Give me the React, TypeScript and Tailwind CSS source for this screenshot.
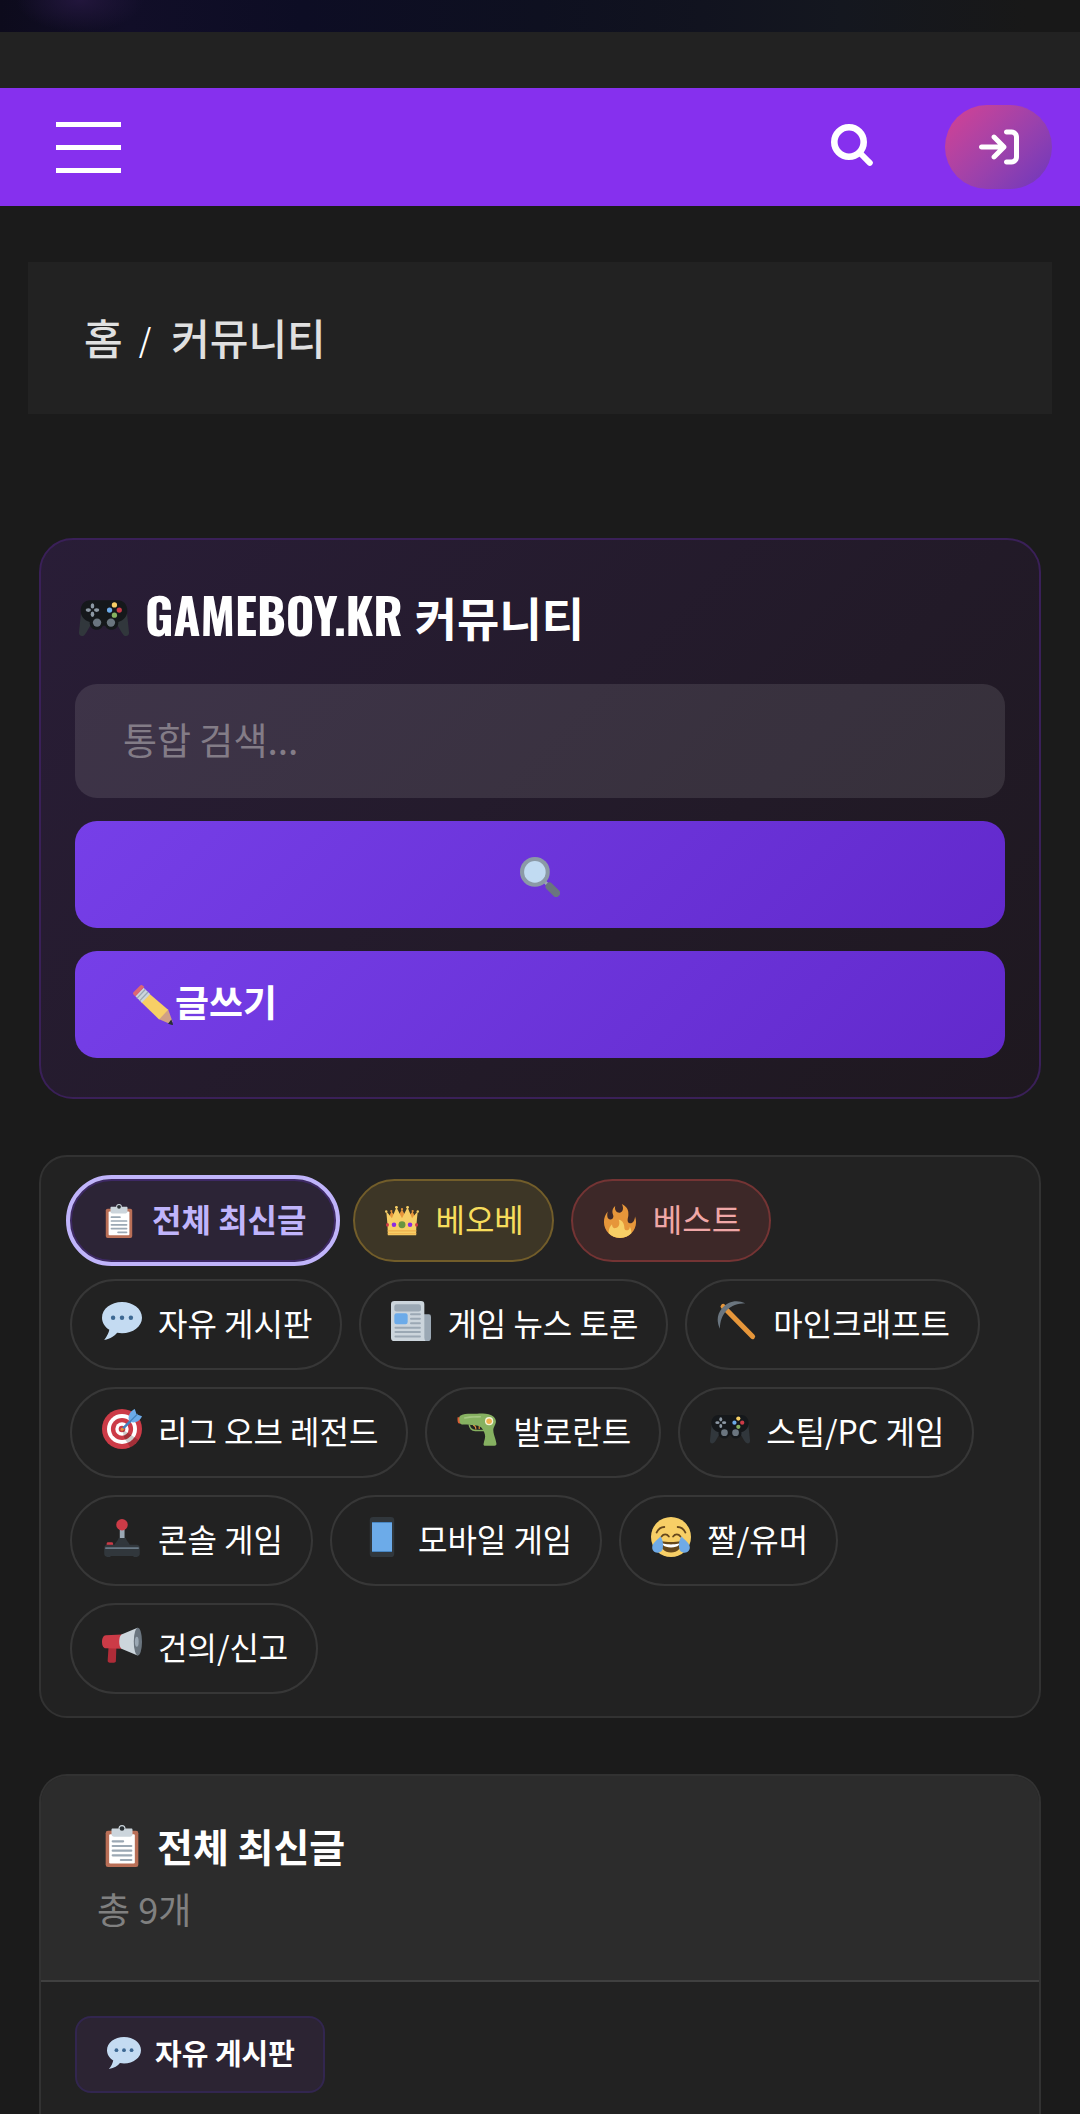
import type { ReactNode } from "react";
import { FaArrowRightToBracket } from "react-icons/fa6";

type IconProps = { className?: string };

const SearchIcon = ({ className = "" }: IconProps) => (
  <svg
    viewBox="0 0 42 42"
    aria-hidden="true"
    fill="none"
    stroke="currentColor"
    className={className}
  >
    <circle cx="18" cy="18" r="14.700" strokeWidth="6.600" />
    <path d="m29 29 9.800 9.800" strokeWidth="6" strokeLinecap="round" />
  </svg>
);

const Emoji = ({
  className = "",
  children,
}: IconProps & { children: ReactNode }) => (
  <svg
    viewBox="0 0 36 36"
    aria-hidden="true"
    className={`shrink-0 ${className}`}
  >
    {children}
  </svg>
);

const Gamepad = ({ className }: IconProps) => (
  <Emoji className={className}>
    <path
      fill="#31373c"
      d="M1.5 14 0 28c-.2 2.300.8 3 2 3 1.500 0 2.200-1 3.500-3l4-7zM34.500 14 36 28c.2 2.300-.8 3-2 3-1.500 0-2.200-1-3.500-3l-4-7z"
    />
    <path
      fill="#15181b"
      d="M8 5.300h20c4 0 6.800 3 6.800 7.500 0 4-2.800 7.200-6.500 8a5 5 0 0 1-9.500 2.800h-1.600a5 5 0 0 1-9.500-2.800c-3.700-.8-6.500-4-6.500-8C1.200 8.300 4 5.300 8 5.300z"
    />
    <g fill="#8d99a5">
      <ellipse cx="9.700" cy="9.300" rx="1.300" ry="1.900" />
      <ellipse cx="9.700" cy="15.300" rx="1.300" ry="1.900" />
      <ellipse cx="6.700" cy="12.300" rx="1.900" ry="1.300" />
      <ellipse cx="12.700" cy="12.300" rx="1.900" ry="1.300" />
    </g>
    <circle cx="25.500" cy="8.600" r="1.900" fill="#f7cf66" />
    <circle cx="25.500" cy="16" r="1.900" fill="#86b161" />
    <circle cx="22" cy="12.300" r="1.900" fill="#6cabe9" />
    <circle cx="29" cy="12.300" r="1.900" fill="#cc3b47" />
    <circle cx="13" cy="21.300" r="3" fill="#6a757f" />
    <circle cx="23" cy="21.300" r="3" fill="#6a757f" />
  </Emoji>
);

const Magnifier = ({ className }: IconProps) => (
  <Emoji className={className}>
    <path stroke="#9ba8b4" strokeWidth="3" d="m21 21 5 5" />
    <path
      stroke="#6a757f"
      strokeWidth="7"
      strokeLinecap="round"
      d="m26.500 26.500 6 6"
    />
    <circle cx="13.400" cy="13.400" r="13.400" fill="#8b9aa6" />
    <circle cx="13.400" cy="13.400" r="9.700" fill="#c1dbf2" />
  </Emoji>
);

const Pencil = ({ className }: IconProps) => (
  <Emoji className={className}>
    <path fill="#d0a086" d="M23 30.500 31.500 21.500 35.600 33 33.500 35.200z" />
    <path fill="#292f33" d="m34.500 31 1.500 4.300c.1.500-.3.800-.8.700l-3.700-1.200z" />
    <path fill="#f7cf66" d="m15 8 16.600 14.200L23.500 31 7.500 15.500z" />
    <path fill="#ccd5dc" d="m9.500 2.500 6 5.500-7.500 8-6-6z" />
    <path
      fill="none"
      stroke="#9ba8b4"
      strokeWidth="1.200"
      d="m11 4-7.500 8M13.500 6.300l-7.500 8"
    />
    <path
      fill="#dd6773"
      d="M.4 6.500 6.300.6c.8-.8 1.800-.8 2.600 0l1.300 1.200-8 8.500L.4 8.500c-.5-.5-.5-1.400 0-2z"
    />
  </Emoji>
);

const Clipboard = ({ className }: IconProps) => (
  <Emoji className={className}>
    <rect x="4" y="5" width="28" height="31" rx="2" fill="#b96f57" />
    <rect x="7" y="8" width="22" height="25" rx="1" fill="#fff" />
    <path
      fill="#ccd5dc"
      d="M10 3h5a3 3 0 0 1 6 0h5c.6 0 1 .5 1 1v4c0 1.100-.9 2-2 2H11a2 2 0 0 1-2-2V4c0-.5.4-1 1-1z"
    />
    <circle cx="18" cy="3" r="2" fill="#292f33" />
    <path
      stroke="#9ba8b4"
      strokeWidth="1.800"
      strokeLinecap="round"
      d="M10 14h9M10 18h16M10 22h16M10 26h16M17 30h9"
    />
  </Emoji>
);

const Crown = ({ className }: IconProps) => (
  <Emoji className={className}>
    <path
      fill="#e6963a"
      d="M14.174 17.075 6.750 7.594l-3.722 9.481zM17.938 5.534l-6.563 12.389H24.500zM21.826 17.075l7.424-9.481 3.722 9.481z"
    />
    <path
      fill="#f7cf66"
      d="M28.669 15.190 23.887 3.523l-5.880 11.668h-.014l-5.880-11.668L7.331 15.190C4.197 10.833 1.280 8.042 1.280 8.042S3 20.750 3 33h30c0-12.250 1.720-24.958 1.720-24.958s-2.917 2.791-6.051 7.148z"
    />
    <g fill="#f7cf66">
      <circle cx="1.300" cy="8" r="1.300" />
      <circle cx="12.100" cy="3.500" r="1.500" />
      <circle cx="23.900" cy="3.500" r="1.500" />
      <circle cx="34.700" cy="8" r="1.300" />
    </g>
    <circle cx="6.700" cy="7.500" r="1.200" fill="#e6963a" />
    <circle cx="29.300" cy="7.500" r="1.200" fill="#e6963a" />
    <circle cx="18" cy="5.500" r="1.200" fill="#e6963a" />
    <circle cx="18" cy="22" r="3.700" fill="#6a953f" />
    <circle cx="26.500" cy="22" r="2.400" fill="#8b2be2" />
    <circle cx="9.500" cy="22" r="2.400" fill="#8b2be2" />
    <ellipse cx="2.600" cy="22" rx="1.600" ry="2" fill="#cc3b47" />
    <ellipse cx="33.400" cy="22" rx="1.600" ry="2" fill="#cc3b47" />
    <path stroke="#efb04e" strokeWidth="1.200" d="M2.800 28.500h30.400M2.800 31.500h30.400" />
  </Emoji>
);

const Fire = ({ className }: IconProps) => (
  <Emoji className={className}>
    <path
      fill="#e6963a"
      d="M35 19c0-2.062-.367-4.039-1.040-5.868-.46 5.389-3.333 8.157-6.335 6.868-2.812-1.208-.917-5.917-.777-8.164.236-3.809-.012-8.169-6.931-11.794 2.875 5.500.333 8.917-2.333 9.125-2.958.231-5.667-2.542-4.667-7.042-3.238 2.386-3.332 6.402-2.333 9 1.042 2.708-.042 4.958-2.583 5.208-2.840.28-4.418-3.041-2.963-8.333C2.520 10.965 1 14.805 1 19c0 9.389 7.611 17 17 17s17-7.611 17-17z"
    />
    <path
      fill="#f7cf66"
      d="M28.394 23.999c.148 3.084-2.561 4.293-4.019 3.709-2.106-.843-1.541-2.291-2.083-5.291s-2.625-5.083-5.708-6c2.250 6.333-1.247 8.667-3.080 9.084-1.872.426-3.753-.001-3.968-4.007C7.352 23.668 6 26.676 6 30c0 .368.023.73.055 1.090C9.125 34.124 13.342 36 18 36s8.875-1.876 11.945-4.910c.032-.36.055-.722.055-1.090 0-2.187-.584-4.236-1.606-6.001z"
    />
  </Emoji>
);

const SpeechBalloon = ({ className }: IconProps) => (
  <Emoji className={className}>
    <path
      fill="#c4dbf2"
      d="M18 1C8.059 1 0 7.268 0 15c0 4.368 2.574 8.268 6.604 10.835C6.080 28.144 4.859 31.569 2 35c5.758-.96 9.439-3.761 11.716-6.416 1.376.262 2.805.416 4.284.416 9.941 0 18-6.268 18-14S27.941 1 18 1z"
    />
    <circle cx="10" cy="15" r="2" fill="#3d6893" />
    <circle cx="18" cy="15" r="2" fill="#3d6893" />
    <circle cx="26" cy="15" r="2" fill="#3d6893" />
  </Emoji>
);

const Newspaper = ({ className }: IconProps) => (
  <Emoji className={className}>
    <path fill="#9ba8b4" d="M28 12h6a2 2 0 0 1 2 2v19a3 3 0 0 1-3 3h-5z" />
    <path
      fill="#ccd5dc"
      d="M3 0h24a3 3 0 0 1 3 3v30c0 1.200.4 2.200 1 3H3a3 3 0 0 1-3-3V3a3 3 0 0 1 3-3z"
    />
    <rect x="3" y="3" width="24" height="6.500" rx="2" fill="#9ba8b4" />
    <rect x="3" y="11" width="12" height="10" rx="2" fill="#6cabe9" />
    <path
      stroke="#9ba8b4"
      strokeWidth="1.800"
      strokeLinecap="round"
      d="M18 12h8M18 16h8M18 20h8M4 24h22M4 28h22M4 32h22"
    />
  </Emoji>
);

const Pickaxe = ({ className }: IconProps) => (
  <Emoji className={className}>
    <path
      stroke="#e6963a"
      strokeWidth="4.600"
      strokeLinecap="round"
      d="m5.500 5 26.500 27"
    />
    <path
      fill="#6a757f"
      d="M2.500 25C-.5 18 0 12 4.500 6.500 10 0 18-1.500 25.500 2 18.500 2.300 13 4 8.800 8.300 4.500 12.800 2.900 18 2.500 25z"
    />
  </Emoji>
);

const Target = ({ className }: IconProps) => (
  <Emoji className={className}>
    <circle cx="18" cy="18" r="18" fill="#cc3b47" />
    <circle cx="18" cy="18" r="13.500" fill="#fff" />
    <circle cx="18" cy="18" r="10" fill="#cc3b47" />
    <circle cx="18" cy="18" r="6" fill="#fff" />
    <circle cx="18" cy="18" r="3" fill="#cc3b47" />
    <path
      fill="#000"
      opacity=".2"
      d="m18.200 18.300 14.800 9.600c-1.800 3-4.600 5.300-7.600 6.600L20 26z"
    />
    <path
      stroke="#4482bd"
      strokeWidth="2.200"
      strokeLinecap="round"
      d="M19 17.500 29.500 7"
    />
    <path
      fill="#6cabe9"
      d="M24 9.500C23.500 5 26 1.500 29.500 0l1.600 4.800L36 6.500C34.500 10 31 12.700 26.500 12z"
    />
    <path stroke="#4482bd" strokeWidth="1.200" d="m24 12.500 8-8" />
    <circle cx="18.200" cy="18.200" r="1.400" fill="#e6963a" />
  </Emoji>
);

const WaterPistol = ({ className }: IconProps) => (
  <Emoji className={className}>
    <path fill="#dd5e35" d="M.5 7.500h3V13H1.800C.6 13 .3 11 .5 7.500z" />
    <path
      fill="none"
      stroke="#86b161"
      strokeWidth="1.300"
      d="M11 14c.5 3.500 2 5 5.500 5.300h8"
    />
    <path
      fill="none"
      stroke="#e6963a"
      strokeWidth="1"
      d="M14.500 14.500c2 .5 2.500 1.500 2.500 4M20 14v4"
    />
    <path
      fill="#86b161"
      d="M2.500 6.200C6 4 11 4.300 16 4.300c5.500 0 8.500-.6 12.500.4 3.500.9 6.300 3.200 6.500 6.300.2 3-2.500 5-2.300 8.500.2 4 2.800 9 2.800 12 0 1-.7 1.500-1.700 1.500h-8.500c-1 0-1.600-.6-1.400-1.600.6-3.400 2-5.400 1.200-8.400-.8-2.800-2.300-6-4.600-7.200C17 14 10 14.500 4.500 14c-2-.2-3-5-2-7.800z"
    />
    <path stroke="#a6c983" strokeWidth="1.400" strokeLinecap="round" d="M7 8c5-1 9-.8 14-1" />
    <circle cx="28.900" cy="11" r="3.700" fill="#f4f4d8" />
    <circle cx="28.900" cy="11" r="2.500" fill="#efb04e" />
  </Emoji>
);

const Joystick = ({ className }: IconProps) => (
  <Emoji className={className}>
    <path fill="#9ba8b4" d="M16 10h4.300v11H16z" />
    <path fill="#31373c" d="M15 19h6.500c.7 3 3 4 4 7.500H10.800c1-3.500 3.400-4.500 4.200-7.500z" />
    <rect x="4.200" y="22.700" width="5.800" height="4" rx="1.300" fill="#cc3b47" />
    <path
      fill="#31373c"
      d="M5 25h26c2 0 3 1.200 3 3v5c0 1.300-.7 2.200-2 2.500 0 .3-.5.500-1 .5h-2c-.6 0-1-.5-1-.8H8c0 .3-.4.800-1 .8H5c-.5 0-1-.2-1-.5-1.300-.3-2-1.200-2-2.500v-5c0-1.800 1-3 3-3z"
    />
    <path stroke="#6a7a86" strokeWidth="1.600" strokeLinecap="round" d="M3.500 28h29" />
    <circle cx="18" cy="7" r="5.200" fill="#cc3b47" />
  </Emoji>
);

const Mobile = ({ className }: IconProps) => (
  <Emoji className={className}>
    <rect x="7" width="22" height="36" rx="3" fill="#31373c" />
    <path fill="#4482bd" d="M9 4.500h18v27H9z" />
    <path fill="#6cabe9" d="M9 5.300h18v25.400H9z" />
  </Emoji>
);

const Joy = ({ className }: IconProps) => (
  <Emoji className={className}>
    <circle cx="18" cy="18" r="18" fill="#f7cf66" />
    <g fill="none" stroke="#65471b" strokeWidth="1.600" strokeLinecap="round">
      <path d="M5 14c1.500-3 4-5 7-5M31 14c-1.500-3-4-5-7-5" />
      <path d="M9.500 17.500c1.800-2.400 4.800-2.400 6.600 0M19.900 17.500c1.800-2.400 4.800-2.400 6.600 0" />
    </g>
    <path
      fill="#65471b"
      d="M18 22.500c-3.600 0-6-.4-9-1-.7-.1-1 .2-1 .8C8 27.500 12 32 18 32s10-4.500 10-9.700c0-.6-.3-.9-1-.8-3 .6-5.400 1-9 1z"
    />
    <path
      fill="#fff"
      d="M9.500 23.700s3.500 1 8.500 1 8.500-1 8.500-1-1.500 3.800-8.500 3.800-8.500-3.800-8.500-3.800z"
    />
    <path
      fill="#6faae6"
      d="M8.500 17.500C11 21 11 24 10.700 28c-.3 2.700-2.500 4.400-5 4.200-2.800-.2-4.800-2.400-4.600-5.200.3-3.700 4-6 7.400-9.500zM27.500 17.500C25 21 25 24 25.300 28c.3 2.700 2.500 4.400 5 4.200 2.800-.2 4.800-2.400 4.600-5.200-.3-3.700-4-6-7.400-9.500z"
    />
  </Emoji>
);

const Megaphone = ({ className }: IconProps) => (
  <Emoji className={className}>
    <path fill="#af2c38" d="M6 18h7l-.5 14.500c0 1-.8 1.500-1.800 1.500H7c-1.200 0-2-.8-1.900-2z" />
    <path fill="#cc3b47" d="M18 8.500 3.500 9.300C1.200 9.500 0 12 0 15s1 5.800 3.500 6L18 21.300z" />
    <path fill="#ccd5dc" d="M17.500 8.500 32 2.500v25l-14.500-6.200c-2.700-2-2.700-10.800 0-12.800z" />
    <ellipse cx="32.300" cy="15" rx="3.700" ry="12.500" fill="#6a757f" />
    <ellipse cx="31.300" cy="15" rx="1.700" ry="4.500" fill="#9ba8b4" />
  </Emoji>
);

const highlights = [
  {
    label: "전체 최신글",
    Icon: Clipboard,
    style:
      "border-[#3e2965] bg-[#2c2436] font-bold text-[#c0b4fb] outline-4 outline-[#c0b4fb]",
  },
  {
    label: "베오베",
    Icon: Crown,
    style: "border-[#725d2a] bg-[#3d3626] text-[#f7dd5c]",
  },
  {
    label: "베스트",
    Icon: Fire,
    style: "border-[#743434] bg-[#3d2828] text-[#f0a7a7]",
  },
];

const boards = [
  { label: "자유 게시판", Icon: SpeechBalloon },
  { label: "게임 뉴스 토론", Icon: Newspaper },
  { label: "마인크래프트", Icon: Pickaxe },
  { label: "리그 오브 레전드", Icon: Target },
  { label: "발로란트", Icon: WaterPistol },
  { label: "스팀/PC 게임", Icon: Gamepad },
  { label: "콘솔 게임", Icon: Joystick },
  { label: "모바일 게임", Icon: Mobile },
  { label: "짤/유머", Icon: Joy },
  { label: "건의/신고", Icon: Megaphone },
];

const App = () => {
  return (
    <div className="flex min-h-screen flex-col bg-[#1b1b1b] font-['Noto_Sans_CJK_KR',sans-serif] text-white">
      {/* Hero bottom edge */}
      <div className="h-8 bg-[radial-gradient(64px_32px_at_80px_0px,#22163c,transparent),linear-gradient(90deg,#0d0b1c_0%,#110e28_12%,#0d0d24_28%,#0e1020_50%,#11131f_65%,#14171f_78%,#181818_95%)]" />
      <div className="h-14 bg-[#222]" />

      {/* Header */}
      <header className="flex items-center justify-between bg-[#8630ee] py-[17px] pr-7 pl-14">
        <button
          type="button"
          aria-label="메뉴"
          className="flex w-[65px] flex-col gap-[18px]"
        >
          <span className="h-[5px] bg-white" />
          <span className="h-[5px] bg-white" />
          <span className="h-[5px] bg-white" />
        </button>
        <div className="flex items-center gap-[72px]">
          <button type="button" aria-label="검색" className="pb-1">
            <SearchIcon className="size-[42px]" />
          </button>
          <a
            href="#login"
            aria-label="로그인"
            className="flex h-[84px] w-[107px] items-center justify-center rounded-full bg-linear-135 from-[#d63f92] to-[#6d35bd]"
          >
            <FaArrowRightToBracket className="size-10" />
          </a>
        </div>
      </header>

      {/* Breadcrumb */}
      <nav
        aria-label="breadcrumb"
        className="mx-7 mt-14 flex h-[152px] items-center gap-4 bg-[#222] px-14 pb-1 text-[42px] font-medium text-[#e0e0e0]"
      >
        <a href="#home">홈</a>
        <span className="pt-1 pr-1 text-[32px] font-normal text-white">/</span>
        <span>커뮤니티</span>
      </nav>

      <main className="mx-[39px] mt-31 flex grow flex-col gap-14">
        {/* Community search */}
        <section className="rounded-[34px] border-2 border-[#3a2058] bg-linear-135 from-[#291d37] to-[#1e181f] px-[34px] pt-[42px] pb-[39px]">
          <h1 className="mb-[30px] flex h-[72px] items-center gap-4 font-bold">
            <Gamepad className="ml-1 size-[50px]" />
            <span className="flex items-baseline gap-3 pb-1.5">
              <span className="font-['Oswald','Liberation_Sans_Narrow',sans-serif] text-[49px]">
                GAMEBOY.KR
              </span>
              <span className="text-[46px]">커뮤니티</span>
            </span>
          </h1>
          <form className="flex flex-col gap-[23px]">
            <input
              type="search"
              aria-label="통합 검색"
              placeholder="통합 검색..."
              className="h-[114px] w-full rounded-[22px] bg-white/10 px-12 pb-1 text-[37px] placeholder:text-[#837c87]"
            />
            <button
              type="submit"
              aria-label="검색"
              className="flex h-[107px] items-center justify-center rounded-[22px] bg-linear-135 from-[#763fe8] to-[#6229cc] pt-1"
            >
              <Magnifier className="size-10" />
            </button>
            <a
              href="#write"
              className="flex h-[107px] items-center gap-0.5 rounded-[22px] bg-linear-135 from-[#763fe8] to-[#6229cc] px-[58px] text-[37px] font-bold"
            >
              <Pencil className="size-10" />
              <span className="pb-1.5">글쓰기</span>
            </a>
          </form>
        </section>

        {/* Board list */}
        <nav
          aria-label="게시판"
          className="flex flex-col gap-[17px] rounded-[28px] border-2 border-[#323232] bg-[#222] px-[29px] py-[22px] text-[32px]"
        >
          <div className="flex flex-wrap gap-[17px]">
            {highlights.map(({ label, Icon, style }) => (
              <a
                key={label}
                href={`#${label}`}
                className={`flex h-[83px] items-center gap-4 rounded-full border-2 pr-7 pl-[30px] ${style}`}
              >
                <Icon className="size-[34px]" />
                <span className="pb-1.5">{label}</span>
              </a>
            ))}
          </div>
          <div className="flex flex-wrap gap-[17px]">
            {boards.map(({ label, Icon }) => (
              <a
                key={label}
                href={`#${label}`}
                className="flex h-[91px] items-center gap-4 rounded-full border-2 border-[#373737] pr-7 pl-[30px]"
              >
                <Icon className="mb-2 size-10" />
                <span className="pb-1.5">{label}</span>
              </a>
            ))}
          </div>
        </nav>

        {/* Latest posts */}
        <section className="grow rounded-t-[28px] border-2 border-b-0 border-[#323232] bg-[#222]">
          <div className="rounded-t-[26px] border-b-2 border-[#404040] bg-[#2c2c2c] px-14 py-[42px]">
            <h2 className="flex h-[60px] items-center gap-3.5 text-[39px] font-bold">
              <Clipboard className="mb-1 ml-1 size-[42px]" />
              <span className="pb-1.5">전체 최신글</span>
            </h2>
            <p className="text-[36px] leading-[60px] text-[#808080]">총 9개</p>
          </div>
          <div className="flex p-[34px]">
            <a
              href="#free"
              className="flex h-[77px] items-center gap-3.5 rounded-2xl border-2 border-[#32264f] bg-[#2c2433] pr-7 pl-[30px] text-[29px] font-bold"
            >
              <SpeechBalloon className="mb-1 size-[34px]" />
              <span className="pb-1">자유 게시판</span>
            </a>
          </div>
        </section>
      </main>
    </div>
  );
};

export default App;
